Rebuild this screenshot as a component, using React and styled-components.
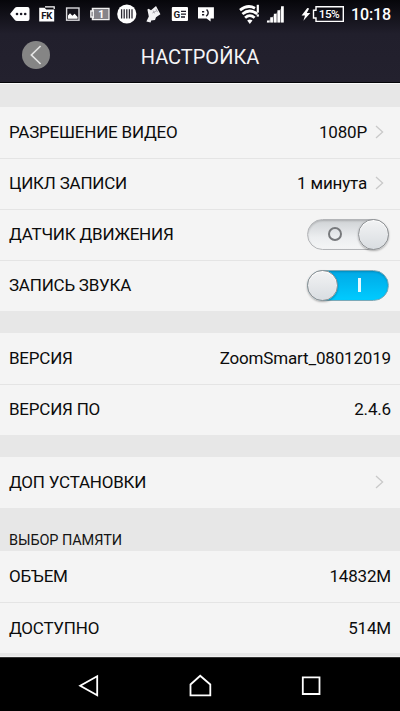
import styled, { createGlobalStyle } from 'styled-components';

const rows = {
  video: [
    { label: 'РАЗРЕШЕНИЕ ВИДЕО', value: '1080P', arrow: true },
    { label: 'ЦИКЛ ЗАПИСИ', value: '1 минута', arrow: true },
    { label: 'ДАТЧИК ДВИЖЕНИЯ', toggle: 'off' },
    { label: 'ЗАПИСЬ ЗВУКА', toggle: 'on' },
  ],
  version: [
    { label: 'ВЕРСИЯ', value: 'ZoomSmart_08012019' },
    { label: 'ВЕРСИЯ ПО', value: '2.4.6' },
  ],
  extra: [{ label: 'ДОП УСТАНОВКИ', arrow: true }],
  memory: [
    { label: 'ОБЪЕМ', value: '14832M' },
    { label: 'ДОСТУПНО', value: '514M' },
  ],
}

const Notifications = () => (
  <IconStrip>
    {/* more */}
    <StatusIcon viewBox="0 0 26 28">
      <path d="M3 14 L7.6 8.3 Q8.6 7 10 7 H20.5 Q22.5 7 22.5 9 V19 Q22.5 21 20.5 21 H10 Q8.6 21 7.6 19.7 Z" fill="#fff" />
      <g fill="#1a1823"><circle cx="10" cy="14" r="1.3" /><circle cx="14.1" cy="14" r="1.3" /><circle cx="18.2" cy="14" r="1.3" /></g>
    </StatusIcon>
    {/* folder */}
    <StatusIcon viewBox="0 0 26 28">
      <path d="M5.2 7.8 H10.6 L12.2 9.4 H20.2 V21.6 H5.2 Z" fill="#fff" />
      <path d="M11 6.8 H20.2 V9" stroke="#fff" strokeWidth="1.2" fill="none" />
      <text x="12.8" y="18.6" fontSize="9.5" fontWeight="700" textAnchor="middle" fill="#1a1823">FK</text>
    </StatusIcon>
    {/* picture */}
    <StatusIcon viewBox="0 0 26 28">
      <rect x="6.6" y="8" width="12.4" height="12.2" fill="#14131b" stroke="#d9d9dc" strokeWidth="1.4" />
      <path d="M8 18.8 V15.5 L10 13.3 L12.4 15.7 L14.6 13.7 L17.6 17 V18.8 Z" fill="#fff" />
    </StatusIcon>
    {/* battery one */}
    <StatusIcon viewBox="0 0 26 28">
      <path d="M5.4 8.3 H22 V19.7 H5.4 V17 H3.8 V11 H5.4 Z" fill="#85848a" stroke="#f0f0f0" strokeWidth="1.3" />
      <path d="M6.4 9.4 V18.6" stroke="#eee" strokeWidth="1.2" />
      <text x="14.2" y="17.8" fontSize="10.5" fontWeight="700" textAnchor="middle" fill="#fff">1</text>
    </StatusIcon>
    {/* barcode */}
    <StatusIcon viewBox="0 0 26 28">
      <circle cx="12.8" cy="14" r="9.6" fill="#fff" />
      <path d="M7.6 9.3 V18.5 M10.2 9.3 V18.5 M12.8 9.3 V18.5 M15.4 9.3 V18.5 M18 9.3 V18.5" stroke="#2b2933" strokeWidth="1.3" />
    </StatusIcon>
    {/* hand with card */}
    <StatusIcon viewBox="0 0 26 28">
      <path d="M7.4 9.6 L8.6 8.8 L11 10.2 L16 6 L20.4 14.2 L16 17.2 L15 20 L11.2 20.6 L10.6 22.4 L6.4 21.6 L8.8 16.5 Z" fill="#f3f3f5" />
      <path d="M13.2 10.6 L14.6 13.4 M15.8 8.8 L17.6 12.2 M12.4 13 L16.6 10.8" stroke="#9a99a2" strokeWidth=".8" fill="none" />
    </StatusIcon>
    {/* news */}
    <StatusIcon viewBox="0 0 26 28">
      <rect x="4.8" y="7" width="16.2" height="14" rx="1" fill="#fff" />
      <text x="9.9" y="17.7" fontSize="9.8" fontWeight="700" textAnchor="middle" fill="#1a1823">G</text>
      <path d="M14 11.4 H19 M14 14.2 H19 M14 17 H18" stroke="#1a1823" strokeWidth="1.3" />
    </StatusIcon>
    {/* smiley message */}
    <StatusIcon viewBox="0 0 26 28">
      <path d="M5 7.2 H20.9 V18.6 H17.6 V21.6 L13.6 18.6 H5 Z" fill="#fff" />
      <path d="M9 11.8 H11.2 M9 14.7 H11.2" stroke="#1a1823" strokeWidth="1.5" />
      <path d="M13.6 9.6 Q17 13 13.2 16.2" stroke="#1a1823" strokeWidth="1.4" fill="none" />
    </StatusIcon>
  </IconStrip>
)

const SystemIcons = () => (
  <SystemStrip viewBox="0 0 110 28">
    {/* wifi */}
    <g fill="none" stroke="#fff" strokeWidth="2.8">
      <path d="M4 10.2 Q11.6 4 19 8.2" />
      <path d="M6.4 14 Q13.8 8 21.2 14" />
      <path d="M9.1 17.7 Q13.8 13.6 18.6 17.7" />
    </g>
    <path d="M11.2 20.6 Q13.8 18.4 16.5 20.6 L13.8 24 Z" fill="#fff" />
    <path d="M21.8 4.8 V12.6" stroke="#fff" strokeWidth="2.2" />
    <rect x="20.7" y="14.4" width="2.2" height="2.2" fill="#fff" />
    {/* signal */}
    <path d="M32.3 22.6 V20.4 M35.6 22.6 V17.2 M39.2 22.6 V13.8 M42.8 22.6 V10.2 M46.4 22.6 V6.2" stroke="#fff" strokeWidth="2.7" />
    <path d="M30.5 22.6 L47.5 6 V22.6 Z" fill="#fff" opacity=".3" />
    {/* charge */}
    <path d="M71.3 8 L65.6 15.4 H69 L67.4 20.8 L74.3 12.9 H70.8 L73.2 8.4 Z" fill="#fff" />
    <path d="M80 6.7 H107.3 V21.4 H80 V18 H77.5 V10.3 H80 Z" fill="none" stroke="#fff" strokeWidth="1.4" />
    <text x="93.3" y="18.2" fontSize="11.8" fontWeight="500" textAnchor="middle" textLength="21" fill="#fff">15%</text>
  </SystemStrip>
)

const Toggle = ({ state }) => (
  <Track $on={state === 'on'}>
    {state === 'off' && <Ring />}
    <Knob $on={state === 'on'} />
    {state === 'on' && <Bar />}
  </Track>
)

const Group = ({ items, gap }) => (
  <List $gap={gap}>
    {items.map((item) => (
      <Row key={item.label}>
        <Label>{item.label}</Label>
        {item.value && <Value $arrow={item.arrow}>{item.value}</Value>}
        {item.arrow && (
          <Chevron viewBox="0 0 9 14">
            <path d="M1 1 L7.6 7 L1 13" fill="none" stroke="#c9c9c9" strokeWidth="1.3" />
          </Chevron>
        )}
        {item.toggle && <Toggle state={item.toggle} />}
      </Row>
    ))}
  </List>
)

const App = () => {
  return (
    <Screen>
      <GlobalStyle />
      <Top>
        <StatusBar>
          <Notifications />
          <SystemIcons />
          <Clock>10:18</Clock>
        </StatusBar>
        <Header>
          <Back>
            <svg width="12" height="20" viewBox="0 0 12 20">
              <path d="M10.6 1 L1.4 10 L10.6 19" fill="none" stroke="#e4e4e4" strokeWidth="1.7" />
            </svg>
          </Back>
          <Title>НАСТРОЙКА</Title>
        </Header>
      </Top>
      <Content>
        <Group items={rows.video} gap={22.5} />
        <Group items={rows.version} gap={22.4} />
        <Group items={rows.extra} gap={22.4} />
        <SectionTitle>ВЫБОР ПАМЯТИ</SectionTitle>
        <Group items={rows.memory} gap={0} />
      </Content>
      <NavBar>
        <NavIcon viewBox="0 0 24 24"><path d="M20.2 2.3 V21.2 L3.2 11.7 Z" /></NavIcon>
        <NavIcon viewBox="0 0 24 24"><path d="M2.5 10.5 L12.2 1.8 L22.3 10.5 V21.4 H2.5 Z" /></NavIcon>
        <NavIcon viewBox="0 0 24 24"><path d="M3.8 3.4 H20.5 V20 H3.8 Z" /></NavIcon>
      </NavBar>
    </Screen>
  )
}

const GlobalStyle = createGlobalStyle`
  body {
    margin: 0;
    background: #000;
    font-family: Roboto, "Liberation Sans", sans-serif;
  }

  * {
    box-sizing: border-box;
  }
`

const Screen = styled.div`
  width: 400px;
  height: 711px;
  display: flex;
  flex-direction: column;
  overflow: hidden;
  background: #e7e7e7;
`

const Top = styled.div`
  height: 83px;
  flex: none;
  background: linear-gradient(#06060a 0, #211f2c 34px, #23212e 100%);
  border-bottom: 1px solid #040408;
`

const StatusBar = styled.div`
  height: 28px;
  display: flex;
`

const IconStrip = styled.div`
  width: 213px;
  margin-left: 7px;
  display: grid;
  grid-template-columns: repeat(8, 1fr);
`

const StatusIcon = styled.svg`
  width: 26px;
  height: 28px;
`

const SystemStrip = styled.svg`
  width: 110px;
  height: 28px;
  margin-left: 16px;
`

const Clock = styled.div`
  width: 54px;
  padding: 1px 9px 0 0;
  font-size: 16px;
  font-weight: 500;
  line-height: 28px;
  letter-spacing: -.1px;
  text-align: right;
  color: #fff;
`

const Header = styled.div`
  height: 54px;
  display: grid;
  grid-template-columns: 50px 1fr 50px;
  align-items: center;
`

const Back = styled.div`
  width: 28px;
  height: 28px;
  margin-left: 22px;
  padding-right: 1px;
  border-radius: 50%;
  display: flex;
  align-items: center;
  justify-content: center;
  background: #858585;
`

const Title = styled.div`
  padding-top: 3px;
  font-size: 20px;
  line-height: 26px;
  text-align: center;
  color: #f4f4f6;
`

const Content = styled.div`
  height: 574px;
  flex: none;
  display: flex;
  flex-direction: column;
  border-top: 1px solid #fafafa;
  border-bottom: 1px solid #f2f2f2;
`

const List = styled.div`
  flex: none;
  margin-top: ${(props) => props.$gap}px;
  background: #f4f4f4;
`

const Row = styled.div`
  height: 51px;
  padding: 0 9px 1px;
  display: flex;
  align-items: center;
  font-size: 17px;
  color: #0c0c0c;

  & + & {
    border-top: 1px solid #e4e4e4;
  }
`

const Label = styled.div`
  flex: 1;
  line-height: 20px;
  letter-spacing: -.22px;
`

const Value = styled.div`
  margin-right: ${(props) => (props.$arrow ? '8px' : 0)};
  line-height: 20px;
  letter-spacing: -.17px;
`

const Chevron = styled.svg`
  width: 9px;
  height: 14px;
  margin-right: 7px;
`

const Track = styled.div`
  width: 82px;
  height: 31px;
  margin-right: 2px;
  display: flex;
  align-items: center;
  justify-content: space-between;
  border: 1px solid ${(props) => (props.$on ? '#7ba9b8' : '#b3b5b8')};
  border-radius: 16px;
  background: ${(props) => (props.$on ? 'linear-gradient(#00a9e6, #00cbff)' : 'linear-gradient(#cfd2d5, #eceef0 60%, #f4f5f6)')};
  box-shadow: inset 0 1px 2px rgba(0, 0, 0, .18);
`

const Knob = styled.div`
  width: 31px;
  height: 31px;
  flex: none;
  margin: ${(props) => (props.$on ? '0 0 0 -1px' : '0 -1px 0 0')};
  border: 1px solid #8f9295;
  border-radius: 50%;
  background: linear-gradient(#f2f3f4, #d9dde1);
  box-shadow: 0 1px 2px rgba(0, 0, 0, .3), inset 0 1px 1px #fff;
`

const Ring = styled.div`
  width: 14px;
  height: 14px;
  margin-left: 20px;
  border: 2px solid #77797c;
  border-radius: 50%;
`

const Bar = styled.div`
  width: 3px;
  height: 14px;
  margin-right: 27px;
  background: #e6f9ff;
`

const SectionTitle = styled.div`
  height: 43px;
  flex: none;
  padding: 24px 9px 0;
  font-size: 14.5px;
  line-height: 18px;
  letter-spacing: -.08px;
  color: #141414;
`

const NavBar = styled.div`
  flex: 1;
  padding: 0 33px;
  display: grid;
  grid-template-columns: repeat(3, 1fr);
  align-items: center;
  justify-items: center;
  border-top: 1px solid #333;
  background: #000;
`

const NavIcon = styled.svg`
  width: 24px;
  height: 24px;
  margin-top: 3px;
  fill: none;
  stroke: #fff;
  stroke-width: 1.8;
`

export default App
